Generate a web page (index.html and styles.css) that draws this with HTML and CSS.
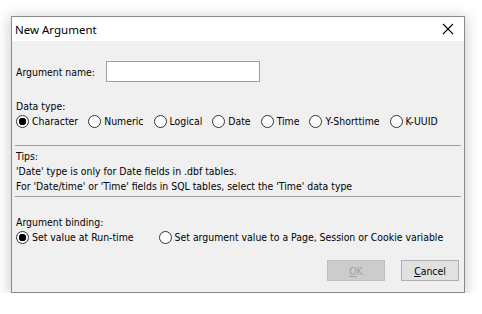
FILE: index.html
```html
<!doctype html>
<html>
<head>
<meta charset="utf-8">
<title>New Argument</title>
	<link rel="stylesheet" href="styles.css">
</head>
<body>
	<div class="dialog">
		<div class="title-bar">
			<span class="title">New Argument</span>
			<svg class="close" width="12" height="12" viewBox="0 0 12 12">
				<path d="M1 1 L11 11 M11 1 L1 11" stroke="#000" stroke-width="1.1" fill="none"/>
			</svg>
		</div>
		<div class="content">
			<div class="name-row">
				<label for="argname">Argument name:</label>
				<input type="text" id="argname" class="text-input">
			</div>

			<div class="group-label">Data type:</div>
			<div class="radio-row types">
				<span class="radio checked">Character</span>
				<span class="radio">Numeric</span>
				<span class="radio">Logical</span>
				<span class="radio">Date</span>
				<span class="radio">Time</span>
				<span class="radio">Y-Shorttime</span>
				<span class="radio">K-UUID</span>
			</div>

			<hr class="sep sep-top">
			<div class="tips">
				<div>Tips:</div>
				<div>'Date' type is only for Date fields in .dbf tables.</div>
				<div>For 'Date/time' or 'Time' fields in SQL tables, select the 'Time' data type</div>
			</div>
			<hr class="sep">

			<div class="group-label binding-label">Argument binding:</div>
			<div class="radio-row binding">
				<span class="radio checked">Set value at Run-time</span>
				<span class="radio">Set argument value to a Page, Session or Cookie variable</span>
			</div>

			<div class="buttons">
				<button class="btn" disabled><u>O</u>K</button>
				<button class="btn"><u>C</u>ancel</button>
			</div>
		</div>
	</div>
</body>
</html>
```
FILE: styles.css
```css
*{box-sizing: border-box;}
body{
	margin: 0;
	background: #fff;
	font-family: "DejaVu Sans Condensed", "DejaVu Sans", sans-serif;
	font-size: 10.4px;
	color: #000;
}
.dialog{
	margin: 16px 0 0 11px;
	width: 454px;
	height: 277px;
	background: #f0f0f0;
	border: 1px solid #8a8a8a;
	box-shadow: 0 2px 12px 2px rgba(0, 0, 0, 0.18);
}
.title-bar{
	height: 24px;
	background: #fff;
	display: flex;
	align-items: center;
	justify-content: space-between;
	padding: 0 10px 0 3px;
}
.title{
	font-family: "Noto Sans", sans-serif;
	font-size: 11.5px;
}
.content{
	padding: 20px 4px 0 4px;
}
.name-row{
	display: flex;
	align-items: center;
	height: 21px;
}
.name-row label{
	width: 90px;
}
.text-input{
	width: 154px;
	height: 21px;
	border: 1px solid #a0a0a0;
	background: #fff;
	margin: 0;
	padding: 0 3px;
	font: inherit;
}
.group-label{
	margin-top: 17px;
	line-height: 15px;
}
.radio-row{
	display: flex;
	align-items: center;
	height: 15px;
	line-height: 15px;
	white-space: nowrap;
}
.radio{
	display: flex;
	align-items: center;
	flex-shrink: 0;
}
.radio::before{
	content: "";
	width: 13px;
	height: 13px;
	border: 1px solid #333;
	border-radius: 50%;
	background: #fff;
	margin-right: 3px;
	box-sizing: border-box;
}
.radio.checked::before{
	background: radial-gradient(circle, #000 3.5px, #fff 4px);
}
.types .radio{ margin-right: 10px; }
.binding .radio:first-child{ margin-right: 25px; }
.sep{
	border: none;
	border-top: 1px solid #a0a0a0;
	margin: 0 0 0 -1px;
	width: 446px;
}
.sep-top{
	margin-top: 16px;
}
.tips{
	line-height: 15px;
	padding: 3px 0 2px;
}
.binding-label{
	margin-top: 18px;
}
.buttons{
	display: flex;
	justify-content: flex-end;
	gap: 16px;
	margin-top: 15px;
	padding-right: 1px;
}
.btn{
	width: 58px;
	height: 21px;
	background: #e1e1e1;
	border: 1px solid #adadad;
	font: inherit;
	color: #000;
	padding: 0;
}
.btn:disabled{
	background: #cccccc;
	border-color: #bfbfbf;
	color: #a0a0a0;
}
```
